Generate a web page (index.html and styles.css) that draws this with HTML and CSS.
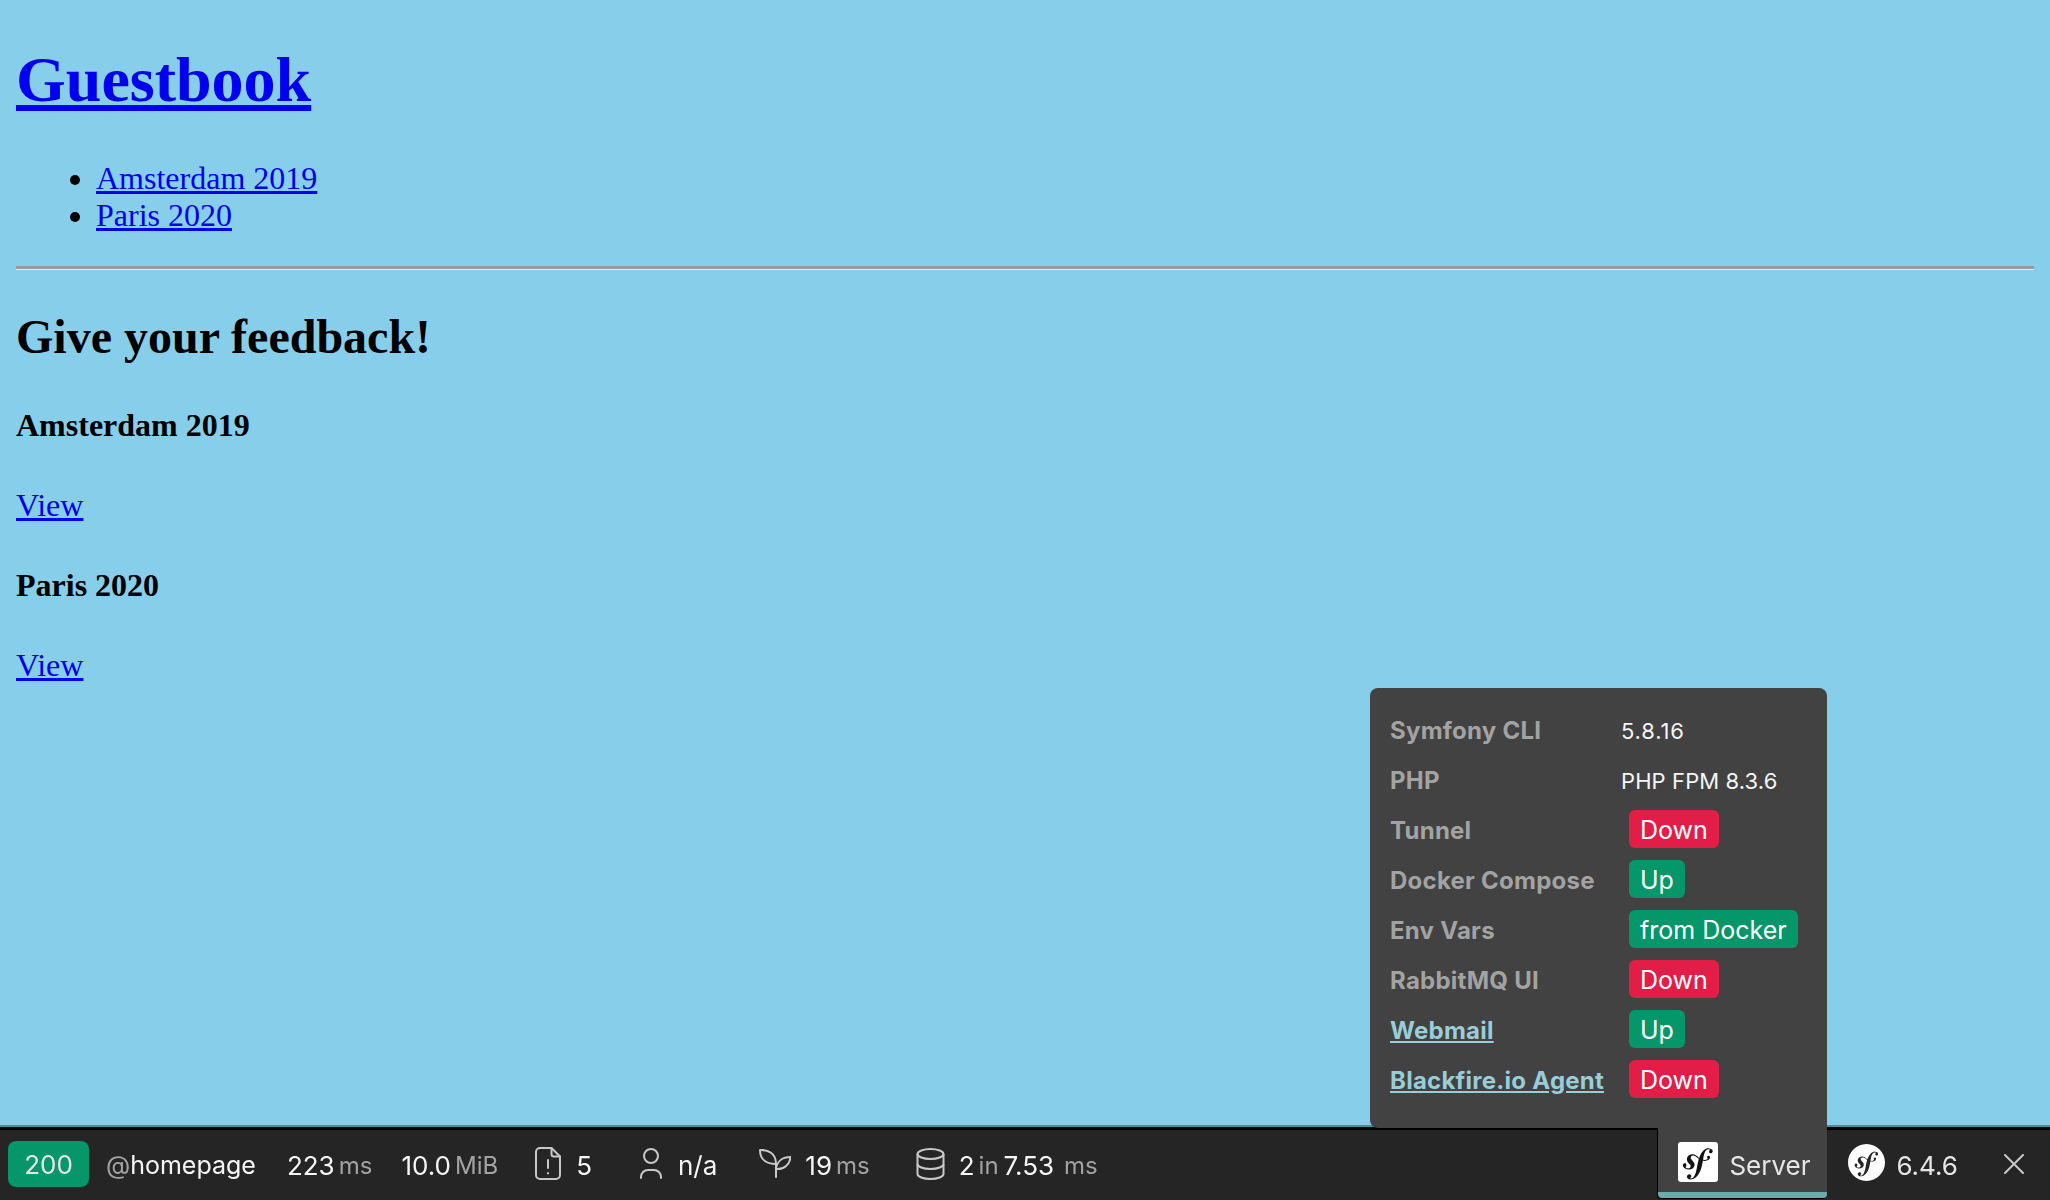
FILE: index.html
```html
<!DOCTYPE html>
<html lang="en">
<head>
<meta charset="utf-8">
<title>Guestbook</title>
<link rel="stylesheet" href="styles.css">
</head>
<body>
<header>
  <h1><a href="#">Guestbook</a></h1>
  <ul>
    <li><a href="#">Amsterdam 2019</a></li>
    <li><a href="#">Paris 2020</a></li>
  </ul>
  <hr>
</header>
<h2>Give your feedback!</h2>
<h4>Amsterdam 2019</h4>
<p><a href="#">View</a></p>
<h4>Paris 2020</h4>
<p><a href="#">View</a></p>

<div class="toolbar">
  <div class="tb-left">
    <span class="status">200</span>
    <span class="route"><i>@</i>homepage</span>
    <span class="val t-time">223<i>ms</i></span>
    <span class="val t-mem">10.0<i>MiB</i></span>
    <span class="val t-log">
      <svg class="ico i-log" viewBox="0 0 26 33" fill="none" stroke="#c8c8c8" stroke-width="2" stroke-linejoin="round" stroke-linecap="round"><path d="M5 1h11.500L25 9.500V28a4 4 0 0 1-4 4H5a4 4 0 0 1-4-4V5a4 4 0 0 1 4-4z"/><path d="M16.500 1v6a2.500 2.500 0 0 0 2.500 2.500h6"/><path d="M13 13v8M13 26v.4"/></svg>
      5</span>
    <span class="val t-user">
      <svg class="ico i-user" viewBox="0 0 22 31" fill="none" stroke="#c8c8c8" stroke-width="2" stroke-linecap="round"><circle cx="11" cy="8" r="7"/><path d="M1 30v-1a7 7 0 0 1 7-7h6a7 7 0 0 1 7 7v1"/></svg>
      n/a</span>
    <span class="val t-twig">
      <svg class="ico i-leaf" viewBox="0 0 32 29" fill="none" stroke="#c8c8c8" stroke-width="2" stroke-linecap="round" stroke-linejoin="round"><path d="M17 15v13"/><path d="M1 1c8-.5 16 3 16 14C8 15 1 11 1 1z"/><path d="M17 20c1-8 7-12 14.500-12C31 15 25 21 17 20z"/></svg>
      19<i>ms</i></span>
    <span class="val t-db">
      <svg class="ico i-db" viewBox="0 0 29 32" fill="none" stroke="#c8c8c8" stroke-width="2"><ellipse cx="14.500" cy="6" rx="13" ry="5"/><path d="M1.500 6v20c0 2.800 5.800 5 13 5s13-2.200 13-5V6"/><path d="M1.500 16c0 2.800 5.800 5 13 5s13-2.200 13-5"/></svg>
      2<i class="in">in</i>7.53<i class="gap">ms</i></span>
  </div>
  <div class="tb-right">
    <div class="server">
      <svg class="sf-square" viewBox="0 0 40 40"><rect width="40" height="40" rx="3" fill="#fff"/><path transform="translate(-3.400 -3.400) scale(1.950)" fill="#111" d="M17.535 4.850c-1.218.043-2.282.714-3.073 1.641-.876 1.020-1.460 2.226-1.877 3.460-.752-.614-1.330-1.414-2.530-1.760-.930-.267-1.906-.157-2.804.510-.425.317-.717.798-.856 1.250-.360 1.176.378 2.223.714 2.597l.733.785c.151.154.515.553.337 1.124-.192.620-.948 1.022-1.725.783-.346-.107-.843-.364-.732-.726.046-.148.152-.260.210-.385.052-.108.076-.190.092-.238.142-.463-.052-1.065-.549-1.219-.464-.142-.938-.030-1.122.568-.209.680.116 1.913 1.856 2.449 2.038.628 3.761-.484 4.006-1.932.154-.907-.255-1.582-1.003-2.447l-.610-.674c-.369-.369-.496-.998-.114-1.481.322-.408.780-.582 1.531-.378 1.096.297 1.584 1.057 2.399 1.670-.336 1.104-.556 2.212-.755 3.205l-.122.740c-.582 3.056-1.027 4.734-2.182 5.696-.233.166-.565.414-1.066.431-.263.008-.348-.173-.352-.251-.006-.184.149-.268.252-.350.153-.084.384-.222.368-.664-.017-.523-.450-.976-1.076-.955-.469.016-1.183.457-1.156 1.265.028.834.805 1.459 1.976 1.420.626-.022 2.024-.276 3.403-1.914 1.605-1.880 2.054-4.033 2.392-5.609l.377-2.080c.209.025.433.042.677.048 1.998.042 2.997-.993 3.012-1.746.010-.455-.299-.903-.732-.892-.310.008-.699.215-.792.645-.091.422.636.803.069 1.170-.403.262-1.125.446-2.143.297l.185-1.023c.378-1.940.845-4.325 2.618-4.383.129-.007.604.006.615.317.003.104-.023.130-.145.368-.124.185-.170.343-.164.525.017.495.393.820.938.800.729-.023.939-.733.927-1.100-.030-.860-.940-1.405-2.143-1.366z"/></svg>
      <span>Server</span>
    </div>
    <div class="version">
      <svg class="sf-round" viewBox="0 0 24 24"><path fill="#fff" fill-rule="evenodd" d="M24 12c0 6.627-5.373 12-12 12S0 18.627 0 12 5.373 0 12 0s12 5.373 12 12zm-6.465-7.150c-1.218.043-2.282.714-3.073 1.641-.876 1.020-1.460 2.226-1.877 3.460-.752-.614-1.330-1.414-2.530-1.760-.930-.267-1.906-.157-2.804.510-.425.317-.717.798-.856 1.250-.360 1.176.378 2.223.714 2.597l.733.785c.151.154.515.553.337 1.124-.192.620-.948 1.022-1.725.783-.346-.107-.843-.364-.732-.726.046-.148.152-.260.210-.385.052-.108.076-.190.092-.238.142-.463-.052-1.065-.549-1.219-.464-.142-.938-.030-1.122.568-.209.680.116 1.913 1.856 2.449 2.038.628 3.761-.484 4.006-1.932.154-.907-.255-1.582-1.003-2.447l-.610-.674c-.369-.369-.496-.998-.114-1.481.322-.408.780-.582 1.531-.378 1.096.297 1.584 1.057 2.399 1.670-.336 1.104-.556 2.212-.755 3.205l-.122.740c-.582 3.056-1.027 4.734-2.182 5.696-.233.166-.565.414-1.066.431-.263.008-.348-.173-.352-.251-.006-.184.149-.268.252-.350.153-.084.384-.222.368-.664-.017-.523-.450-.976-1.076-.955-.469.016-1.183.457-1.156 1.265.028.834.805 1.459 1.976 1.420.626-.022 2.024-.276 3.403-1.914 1.605-1.880 2.054-4.033 2.392-5.609l.377-2.080c.209.025.433.042.677.048 1.998.042 2.997-.993 3.012-1.746.010-.455-.299-.903-.732-.892-.310.008-.699.215-.792.645-.091.422.636.803.069 1.170-.403.262-1.125.446-2.143.297l.185-1.023c.378-1.940.845-4.325 2.618-4.383.129-.007.604.006.615.317.003.104-.023.130-.145.368-.124.185-.170.343-.164.525.017.495.393.820.938.800.729-.023.939-.733.927-1.100-.030-.860-.940-1.405-2.143-1.366z"/></svg>
      <span>6.4.6</span>
    </div>
    <svg class="close" viewBox="0 0 20 20" fill="none" stroke="#c8c8c8" stroke-width="2" stroke-linecap="round"><path d="M1 1l18 18M19 1L1 19"/></svg>
  </div>
</div>

<div class="tip">
  <div class="row"><b>Symfony CLI</b><span class="txt num">5.8.16</span></div>
  <div class="row"><b>PHP</b><span class="txt">PHP FPM 8.3.6</span></div>
  <div class="row"><b>Tunnel</b><span class="tag red">Down</span></div>
  <div class="row"><b>Docker Compose</b><span class="tag green">Up</span></div>
  <div class="row"><b>Env Vars</b><span class="tag green">from Docker</span></div>
  <div class="row"><b>RabbitMQ UI</b><span class="tag red">Down</span></div>
  <div class="row"><b><a href="#">Webmail</a></b><span class="tag green">Up</span></div>
  <div class="row"><b><a href="#">Blackfire.io Agent</a></b><span class="tag red">Down</span></div>
</div>
</body>
</html>
```
FILE: styles.css
```css
html { background: #87ceeb; }
body {
  margin: 16px;
  font-family: "Liberation Serif", serif;
  font-size: 32px;
  color: #000;
  background: #87ceeb;
}
a { color: #00e; }
h1 { font-size: 64px; margin: 27px 0 43px; }
ul { margin: 32px 0; padding-left: 80px; }
hr { height: 0; margin: 16px 0; border: 0; border-top: 3px solid #9a9a9a; border-bottom: 1px solid #eee; }
h2 { font-size: 48px; margin: 39px 0 38px; }
h4 { font-size: 32px; margin: 43px 0; }
p { margin: 32px 0; }

.toolbar {
  position: fixed;
  left: 0;
  right: 0;
  bottom: 0;
  height: 70px;
  display: flex;
  justify-content: space-between;
  background: #252525;
  border-top: 3px solid #000;
  box-shadow: 0 -2px 0 #4d8ba5;
  font-family: Inter, sans-serif;
  font-size: 26px;
  color: #f5f5f5;
}
.tb-left, .tb-right, .val, .server, .version { display: flex; align-items: center; }
.tb-left { padding-left: 8px; }
.status {
  width: 81px;
  height: 46px;
  margin-bottom: 2px;
  border-radius: 8px;
  background: #059669;
  color: #e5e5e5;
  display: flex;
  align-items: center;
  justify-content: center;
  font-size: 26px;
}
i { font-style: normal; color: #a3a3a3; }
.route { margin-left: 17px; font-size: 25px; }
.val i { margin-left: 4px; font-size: 24px; }
.t-time { margin-left: 31px; }
.t-mem { margin-left: 29px; }
.t-log { margin-left: 37px; }
.t-user { margin-left: 48px; }
.t-twig { margin-left: 42px; }
.t-db { margin-left: 46px; }
.ico { flex: none; margin-bottom: 3px; }
.i-log { width: 26px; height: 33px; margin-right: 15px; }
.i-user { width: 22px; height: 31px; margin-right: 16px; }
.i-leaf { width: 32px; height: 29px; margin-right: 14px; }
.i-db { width: 29px; height: 32px; margin-right: 14px; }
.val i.gap { margin-left: 10px; }
.val i.in { margin-right: 5px; }

.tb-right { align-items: stretch; }
.server {
  width: 169px;
  height: 71px;
  margin: -3px 21px 0 0;
  padding-left: 20px;
  box-sizing: border-box;
  background: #424242;
  border-bottom: 6px solid #6fa9ab;
  border-radius: 0 0 4px 4px;
  gap: 11px;
  box-shadow: -1px 1px 0 #000;
  color: #e5e5e5;
}
.sf-square { width: 40px; height: 40px; margin-top: 5px; }
.server span { margin-top: 11px; }
.version { gap: 11px; color: #e5e5e5; }
.sf-round { width: 37px; height: 37px; margin-bottom: 6px; }
.close { width: 20px; height: 20px; align-self: center; margin: 0 26px 2px 46px; }

.tip {
  position: fixed;
  left: 1370px;
  top: 688px;
  width: 457px;
  height: 440px;
  box-sizing: border-box;
  padding: 18px 20px;
  background: #424242;
  border-radius: 8px 8px 0 8px;
  font-family: Inter, sans-serif;
  font-size: 24px;
  color: #f5f5f5;
}
.row { display: flex; align-items: center; height: 50px; }
.row b { width: 231px; margin-bottom: 2px; color: #a3a3a3; font-weight: 700; flex: none; letter-spacing: .25px; }
.row b a { color: #99cdd8; }
.txt { font-size: 22px; letter-spacing: .1px; }
.num { letter-spacing: .8px; }
.tag {
  margin: 0 0 4px 8px;
  height: 38px;
  box-sizing: border-box;
  padding: 2px 11px 0;
  border-radius: 6px;
  color: #fff;
  display: flex;
  align-items: center;
  font-size: 25px;
}
.red { background: #e11d48; }
.green { background: #059669; }
```
